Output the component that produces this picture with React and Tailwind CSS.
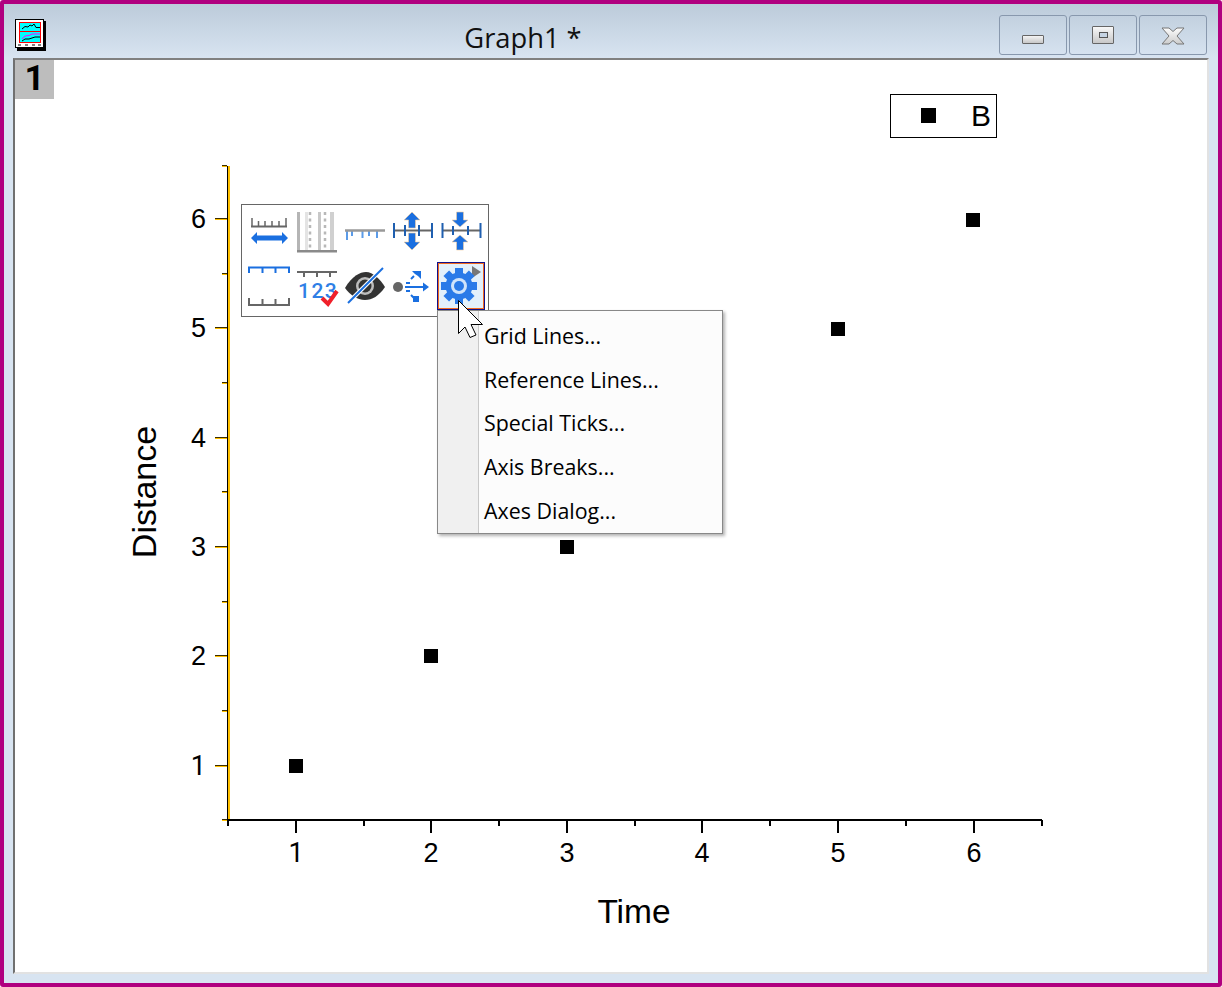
const BLUE = "#1a6fe0";
const GRAY = "#666666";

const yMajor = [766, 656, 547, 438, 328, 219];
const yMinor = [820, 711, 602, 492, 383, 274, 166];
const xMajor = [296, 431, 567, 702, 838, 974];
const xMinor = [228, 364, 499, 635, 770, 906, 1042];
const points = [
  [296, 766],
  [431, 656],
  [567, 547],
  [838, 329],
  [973, 220],
];
const menuItems = ["Grid Lines...", "Reference Lines...", "Special Ticks...", "Axis Breaks...", "Axes Dialog..."];

// Liberation Sans draws its 1 with a foot, the reference has none
const tickFont = (n) => (n === 1 ? "Roboto, sans-serif" : "'Liberation Sans', sans-serif");

function Icon({ children }) {
  return (
    <svg width="48" height="48" viewBox="0 0 48 48" className="block">
      {children}
    </svg>
  );
}

function HArrow() {
  return (
    <Icon>
      <path d="M6 18.5H42" stroke={GRAY} strokeWidth="2" />
      <path d="M7 18V10M13.5 18V13M20 18V13M27 18V13M34 18V13M41 18V10" stroke={GRAY} strokeWidth="1.5" />
      <path d="M6 30L12 24V27.5H37V24L43 30L37 36V32.5H12V36Z" fill={BLUE} />
    </Icon>
  );
}

function GridIcon() {
  return (
    <Icon>
      <rect x="4" y="4" width="3" height="40" fill="#b5b5b5" />
      <rect x="25" y="4" width="3" height="40" fill="#c8c8c8" />
      <rect x="37" y="4" width="4" height="40" fill="#d0d0d0" />
      <rect x="12" y="4" width="3" height="40" fill="#e4e4e4" />
      <path d="M17 4V44" stroke="#b8b8b8" strokeWidth="2.5" strokeDasharray="3 3.5" />
      <path d="M32 4V44" stroke="#b8b8b8" strokeWidth="2.5" strokeDasharray="3 3.5" />
      <rect x="4" y="42" width="40" height="2.5" fill="#8a8a8a" />
    </Icon>
  );
}

function BlueTicks() {
  return (
    <Icon>
      <path d="M6 22 V32M11 22V28M21.5 22V30M28 22V28M36 22V30" stroke="#5b9be8" strokeWidth="2" />
      <path d="M4 22.5H44" stroke="#999999" strokeWidth="2.5" />
    </Icon>
  );
}

function ExpandV() {
  return (
    <Icon>
      <path d="M4 22.5H44" stroke={GRAY} strokeWidth="2" />
      <path d="M5 15V30M16 17V28M30 17V28M43 15V30" stroke="#1f5fb0" strokeWidth="2" />
      <path d="M23 4L31 12H26.5V20H19.5V12H15Z" fill={BLUE} stroke="#f4cfa0" strokeWidth="0.6" />
      <path d="M23 42L31 34H26.5V25H19.5V34H15Z" fill={BLUE} stroke="#f4cfa0" strokeWidth="0.6" />
    </Icon>
  );
}

function CollapseV() {
  return (
    <Icon>
      <path d="M5 22.5H44" stroke={GRAY} strokeWidth="2" />
      <path d="M5.5 15V30M16 18V27M31 18V27M43.5 15V30" stroke="#1f5fb0" strokeWidth="2" />
      <path d="M23 19L31 12H26.5V4H19.5V12H15Z" fill={BLUE} stroke="#f4cfa0" strokeWidth="0.6" />
      <path d="M23 27L31 34H26.5V42H19.5V34H15Z" fill={BLUE} stroke="#f4cfa0" strokeWidth="0.6" />
    </Icon>
  );
}

function TwoRulers() {
  return (
    <Icon>
      <path d="M4 11V5.5H44V11M17.5 5V11M30.5 5V11" fill="none" stroke={BLUE} strokeWidth="2" />
      <path d="M4 36V43H44V36M17.5 43V37M30.5 43V37" fill="none" stroke={GRAY} strokeWidth="2" />
    </Icon>
  );
}

function NumberCheck() {
  return (
    <Icon>
      <path d="M4 10H44" stroke={GRAY} strokeWidth="2" />
      <path d="M11 10V15M24 10V15M37 10V15" stroke={GRAY} strokeWidth="2" />
      <text x="5" y="36" fontFamily="Roboto, sans-serif" fontSize="21" fontWeight="500" fill="#2f7fe6" letterSpacing="1.5">
        123
      </text>
      <path d="M29 36L35 42L44 29" fill="none" stroke="#f0202a" strokeWidth="4" />
    </Icon>
  );
}

function EyeOff() {
  return (
    <Icon>
      <path d="M4 26C11 14 19 10 25 10C32 10 39 17 44 25C38 34 31 38 24 38C16 38 9 33 4 26Z" fill="#333333" />
      <circle cx="24" cy="24" r="9" fill="#bdbdbd" />
      <circle cx="24" cy="24" r="6.5" fill="#333333" />
      <path d="M42 6L7 41" stroke="#ffffff" strokeWidth="4" />
      <path d="M42 6L7 41" stroke={BLUE} strokeWidth="2" />
    </Icon>
  );
}

function Branch() {
  return (
    <Icon>
      <circle cx="9" cy="25" r="5" fill={GRAY} />
      <path d="M16 25H38" stroke={BLUE} strokeWidth="2" />
      <path d="M40 25L34 20.5V29.5Z" fill={BLUE} />
      <path d="M17 21H21M22 17L25 14" stroke={BLUE} strokeWidth="2" />
      <path d="M17 29H21M22 33L25 36" stroke={BLUE} strokeWidth="2" />
      <path d="M23 9H32V17L29 14L26 12Z" fill={BLUE} />
      <rect x="24" y="34" width="6" height="6" fill={BLUE} />
    </Icon>
  );
}

function Gear() {
  return (
    <Icon>
      <path d="M35 4L44 10L35 16Z" fill="#777777" />
      {[0, 45, 90, 135].map((deg) => (
        <rect key={deg} x="18" y="6" width="8" height="36" fill="#2a7ae8" transform={`rotate(${deg} 22 24)`} />
      ))}
      <circle cx="22" cy="24" r="13.5" fill="#2a7ae8" />
      <circle cx="22" cy="24" r="8" fill="#cfe3fa" />
      <circle cx="22" cy="24" r="5" fill="#2a7ae8" />
    </Icon>
  );
}

function GraphIcon() {
  return (
    <svg width="32" height="32" viewBox="0 0 32 32" className="block">
      <rect x="2" y="2" width="29" height="30" fill="#000000" />
      <rect x="0.5" y="0.5" width="28" height="28" fill="#ffffff" stroke="#000000" />
      <rect x="4.5" y="3.5" width="21" height="20" fill="#00ffff" stroke="#ff0000" />
      <path d="M4 12.5H26" stroke="#ff0000" />
      <path d="M7 10L10 7.5L13 8L15 6L17 7L19 5L21 8.5H25" fill="none" stroke="#000000" />
      <path d="M7 20L10 17L14 16.5L17 15H25" fill="none" stroke="#ff00ff" />
      <path d="M7 22L10 20L14 20L17 19L20 18H25" fill="none" stroke="#000000" />
      <path d="M3 26H6M10 26H13M17 26H20M23 26H26" stroke="#000000" />
    </svg>
  );
}

function Chart() {
  return (
    <svg width="1192" height="910" viewBox="15 60 1192 910" className="block">
      {/* y axis */}
      <path d="M227.5 166V820" stroke="#000000" />
      <path d="M229 166V821" stroke="#ffc000" strokeWidth="2" />
      {yMajor.map((y) => (
        <g key={y}>
          <path d={`M215 ${y - 0.5}H227`} stroke="#3a2c00" />
          <path d={`M215 ${y + 0.5}H227`} stroke="#ffc000" />
        </g>
      ))}
      {yMinor.map((y) => (
        <g key={y}>
          <path d={`M222 ${y - 0.5}H227`} stroke="#3a2c00" />
          <path d={`M222 ${y + 0.5}H227`} stroke="#ffc000" />
        </g>
      ))}
      {yMajor.map((y, i) => (
        <text key={y} x="206" y={y + 9} textAnchor="end" fontSize="27" fontFamily={tickFont(i + 1)} fill="#000000">
          {i + 1}
        </text>
      ))}

      {/* x axis */}
      <path d="M228 820H1042" stroke="#000000" strokeWidth="2" />
      {xMajor.map((x) => (
        <path key={x} d={`M${x} 820V833`} stroke="#000000" strokeWidth="2" />
      ))}
      {xMinor.map((x) => (
        <path key={x} d={`M${x} 820V826`} stroke="#000000" strokeWidth="2" />
      ))}
      {xMajor.map((x, i) => (
        <text key={x} x={x} y="862" textAnchor="middle" fontSize="27" fontFamily={tickFont(i + 1)} fill="#000000">
          {i + 1}
        </text>
      ))}

      <text x="634" y="923" textAnchor="middle" fontSize="33.5" fontFamily="'Liberation Sans', sans-serif" fill="#000000">
        Time
      </text>
      <text x="156" y="492" textAnchor="middle" fontSize="34" fontFamily="'Liberation Sans', sans-serif" fill="#000000" transform="rotate(-90 156 492)">
        Distance
      </text>

      {/* data */}
      {points.map(([x, y]) => (
        <rect key={x} x={x - 7} y={y - 7} width="14" height="14" fill="#000000" />
      ))}

      {/* legend */}
      <rect x="890.5" y="94.5" width="106" height="43" fill="#ffffff" stroke="#000000" />
      <rect x="921" y="108" width="15" height="15" fill="#000000" />
      <text x="971" y="126" fontSize="30" fontFamily="'Liberation Sans', sans-serif" fill="#000000">
        B
      </text>
    </svg>
  );
}

export default function App() {
  return (
    <div className="w-[1222px] h-[987px] flex flex-col border-4 border-[#b0007f] rounded-[3px] bg-[#d8e4f1] overflow-hidden">
      {/* title bar */}
      <div className="h-[54px] shrink-0 flex bg-gradient-to-b from-[#bccbda] to-[#d8e4f1]">
        <div className="pl-[11px] pt-[15px] w-[43px] shrink-0">
          <GraphIcon />
        </div>
        <div className="flex-1 pt-[15px] text-center text-[27.3px] leading-[38px] text-[#111111] font-['Open_Sans',sans-serif]">
          Graph1 *
        </div>
        <div className="flex gap-[2px] pt-[11px] pr-[11px] shrink-0">
          <div className="w-[68px] h-[40px] border border-[#8898ad] rounded-[3px] flex justify-center items-end pb-[10px]">
            <div className="w-[22px] h-[9px] border border-[#666666] rounded-[1px] bg-gradient-to-b from-[#f4f4f4] to-[#c8c8c8]"></div>
          </div>
          <div className="w-[68px] h-[40px] border border-[#8898ad] rounded-[3px] flex justify-center items-end pb-[10px]">
            <div className="w-[22px] h-[18px] border border-[#666666] rounded-[1px] bg-gradient-to-b from-[#f8f8f8] to-[#c8c8c8] flex items-center justify-center">
              <div className="w-[9px] h-[6px] border border-[#555555] bg-[#c6d4e3]"></div>
            </div>
          </div>
          <div className="w-[68px] h-[40px] border border-[#8898ad] rounded-[3px] flex justify-center items-end pb-[9px]">
            <svg width="24" height="18" viewBox="0 0 24 18" className="block">
              <defs>
                <linearGradient id="closeFill" x1="0" y1="0" x2="0" y2="1">
                  <stop offset="0" stopColor="#fcfcfc" />
                  <stop offset="1" stopColor="#cccccc" />
                </linearGradient>
              </defs>
              <path d="M1 1H8L12 4.5L16 1H23L16 9L23 17H16L12 13.5L8 17H1L8 9Z" fill="url(#closeFill)" stroke="#777777" />
            </svg>
          </div>
        </div>
      </div>

      {/* client area */}
      <div className="mx-[9px] h-[916px] shrink-0 relative bg-white border-2 border-t-[#808080] border-l-[#707070] border-r-[#e2e2e2] border-b-[#e2e2e2]">
        <div className="absolute left-0 top-0 w-[39px] h-[39px] bg-[#bdbdbd] flex items-center justify-center text-[35px] font-bold text-black font-['Roboto',sans-serif]">
          1
        </div>

        <Chart />

        {/* mini toolbar */}
        <div className="absolute left-[226px] top-[144px] border border-[#666666] bg-white pt-[3px] pl-[3px] pr-[3px] pb-[6px] grid grid-cols-[repeat(5,48px)] gap-y-[6px]">
          <HArrow />
          <GridIcon />
          <BlueTicks />
          <ExpandV />
          <CollapseV />
          <TwoRulers />
          <NumberCheck />
          <EyeOff />
          <Branch />
          <div className="w-[48px] h-[48px] border border-[#10108a] bg-[#e3f0fb] outline outline-1 -outline-offset-2 outline-[#f06a20]">
            <div className="-m-px">
              <Gear />
            </div>
          </div>
        </div>

        {/* context menu */}
        <div className="absolute left-[422px] top-[250px] w-[286px] h-[224px] border border-[#888888] bg-[#fcfcfc] shadow-[2px_2px_3px_rgba(0,0,0,0.3)] flex">
          <div className="w-[41px] shrink-0 bg-[#f0f0f0] border-r border-[#c8c8c8]"></div>
          <div className="flex-1 pt-[3px] flex flex-col">
            {menuItems.map((item) => (
              <div key={item} className="h-[44px] pl-[5px] flex items-center text-[21.4px] text-black font-['Open_Sans',sans-serif]">
                {item}
              </div>
            ))}
          </div>
        </div>

        {/* mouse pointer */}
        <svg width="30" height="42" viewBox="0 0 30 42" className="absolute left-[442px] top-[239px]">
          <path d="M1.5 1.5V34.5L8 28L13 38.5L19 36L14 25.5H25.5Z" fill="#ffffff" stroke="#000000" />
        </svg>
      </div>
    </div>
  );
}
